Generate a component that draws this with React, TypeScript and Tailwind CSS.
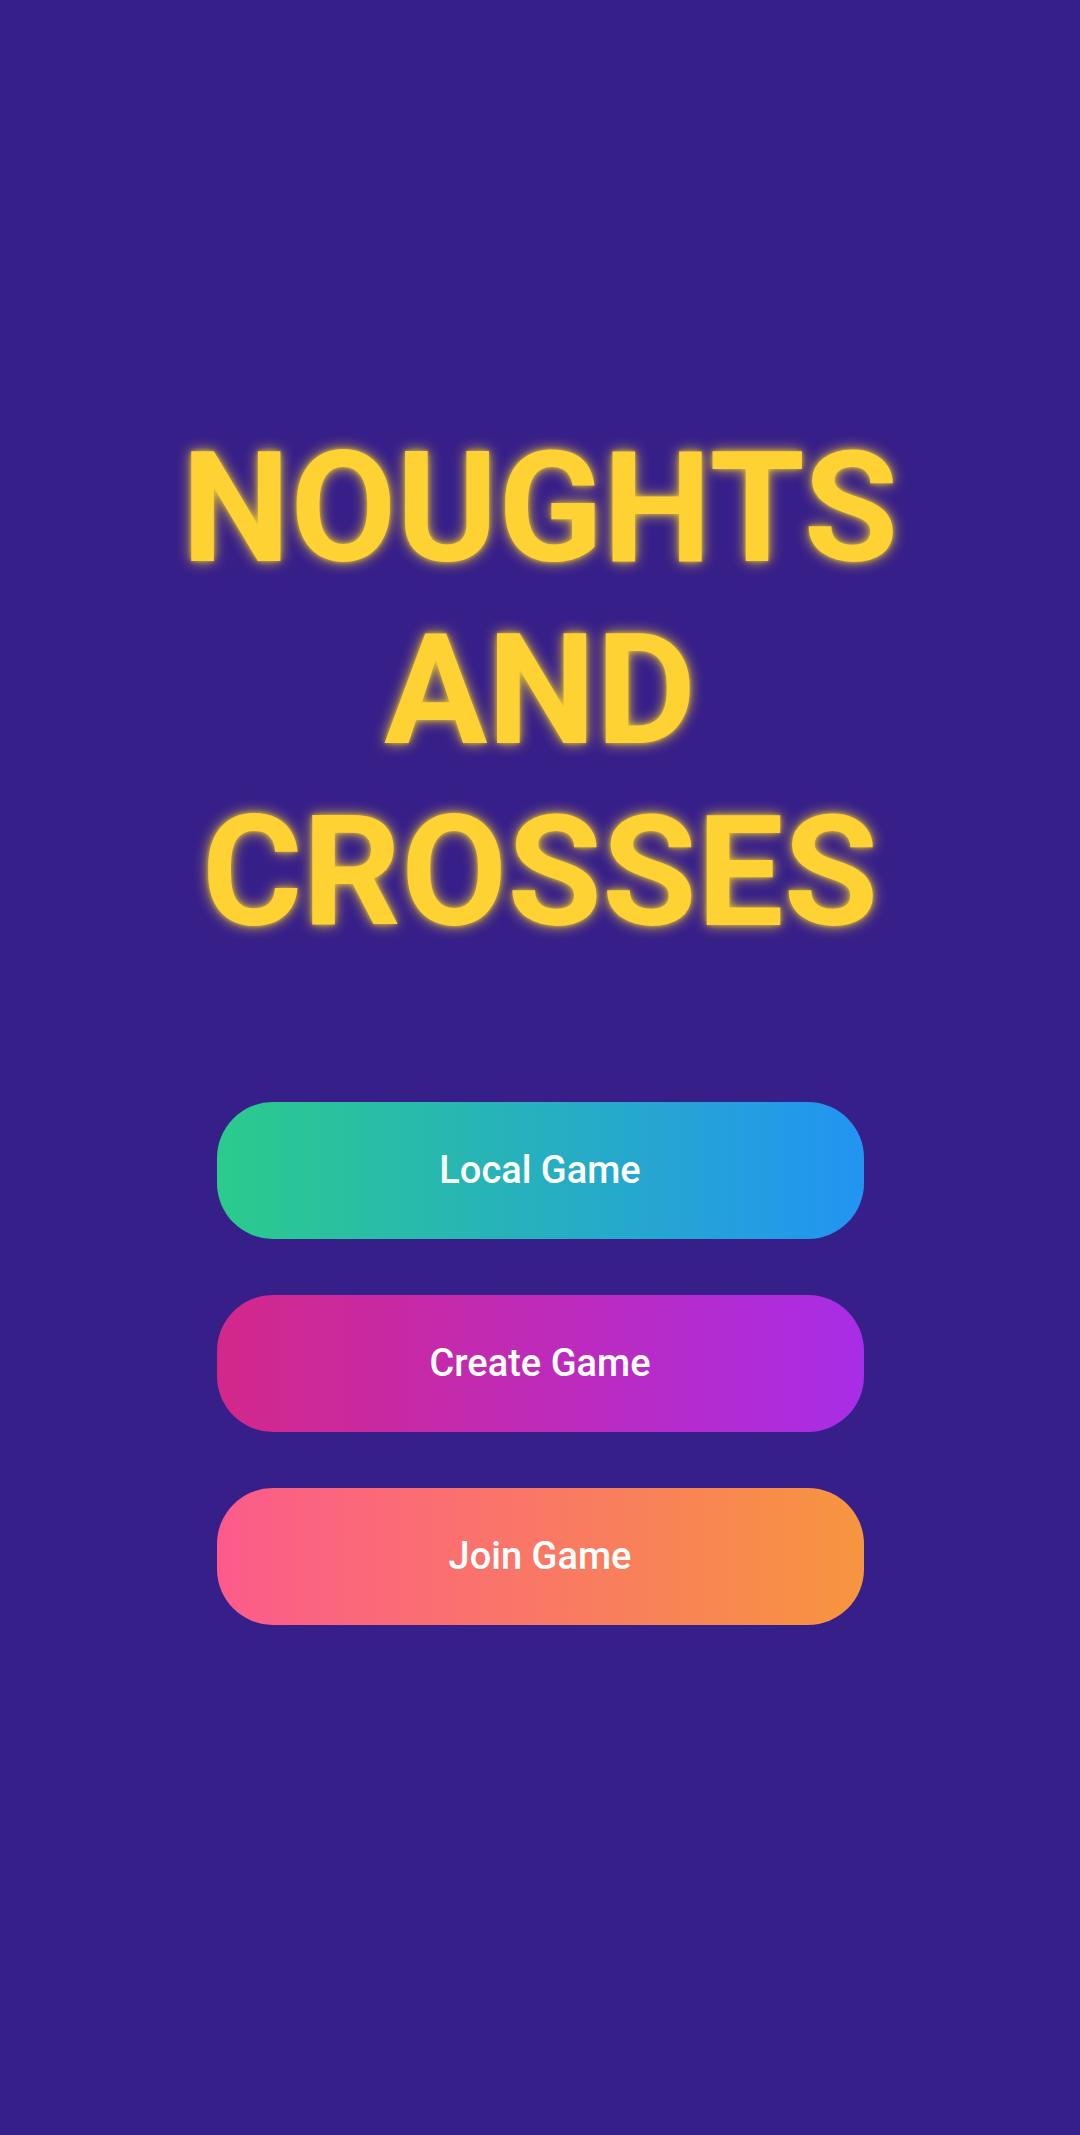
import React from "react";

export default function App() {
  const buttons = [
    { label: "Local Game", cls: "bg-[linear-gradient(to_right,#2bcb8c,#2294f3)]" },
    { label: "Create Game", cls: "bg-[linear-gradient(to_right,#d3288a,#a92de7)]" },
    { label: "Join Game", cls: "bg-[linear-gradient(to_right,#fc5b8b,#f7953f)]" },
  ];
  return (
    <div className="w-[1080px] h-[2135px] bg-[#371f8a] flex flex-col items-center pt-[418px] font-['Roboto',sans-serif]">
      <h1 className="text-center font-bold text-[154px] leading-[182px] text-[#fdd232] [text-shadow:0_0_14px_rgba(255,220,40,0.85),0_0_4px_rgba(255,220,40,0.6)]">
        <div>NOUGHTS</div>
        <div>AND</div>
        <div>CROSSES</div>
      </h1>
      <div className="mt-[138px] flex flex-col gap-[56px]">
        {buttons.map((b) => (
          <button
            key={b.label}
            className={`w-[647px] h-[137px] rounded-[56px] flex items-center justify-center text-white font-medium text-[38px] ${b.cls}`}
          >
            {b.label}
          </button>
        ))}
      </div>
    </div>
  );
}
